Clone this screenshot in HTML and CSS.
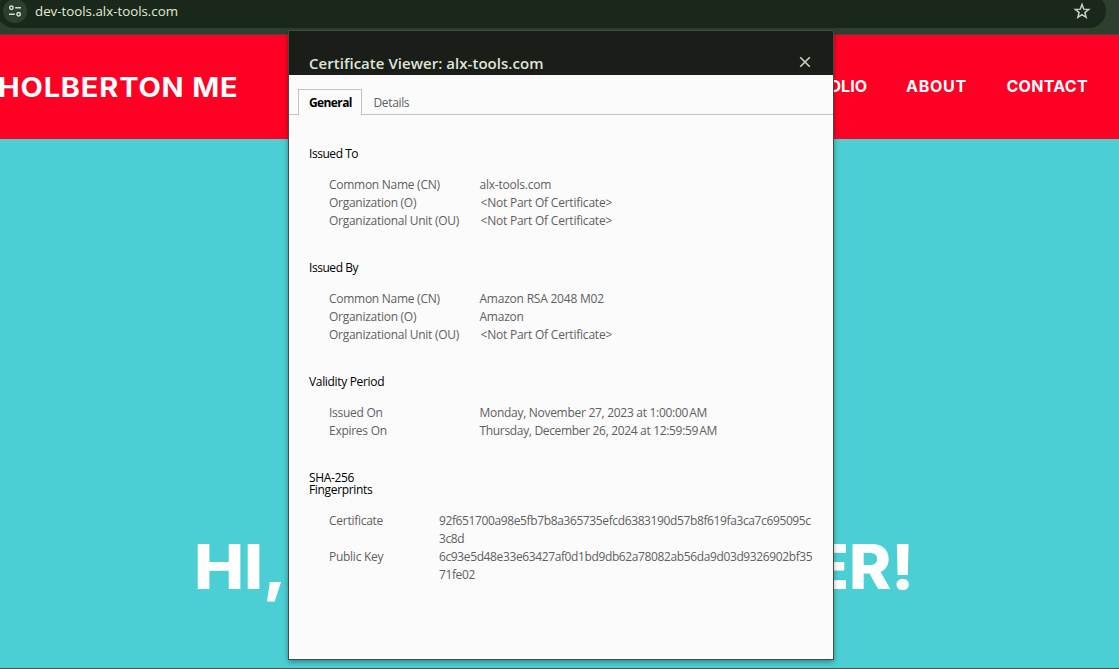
FILE: index.html
```
<!DOCTYPE html>
<html lang="en">
<head>
<meta charset="utf-8">
<title>Certificate Viewer</title>
<link rel="stylesheet" href="styles.css">
</head>
<body>
<div class="browser">
  <div class="toolbar">
    <div class="omnibox">
      <span class="site-info">
        <svg width="24" height="24" viewBox="0 0 24 24" fill="none" stroke="#d5ded2" stroke-width="1.5"><circle cx="8.4" cy="8.8" r="1.7"/><path d="M12.2 8.8H18M6 15.2h5.8"/><circle cx="15.6" cy="15.2" r="1.7"/></svg>
      </span>
      <span class="url">dev-tools.alx-tools.com</span>
      <svg class="star" width="18" height="18" viewBox="0 0 18 18" fill="none" stroke="#c8cfc5" stroke-width="1.5"><path d="M9 2.5l1.75 4.65 4.95.25-3.85 3.15 1.3 4.85L9 12.7l-4.15 2.7 1.3-4.85L2.3 7.4l4.95-.25z"/></svg>
    </div>
  </div>
  <header class="site-header">
    <div class="brand">HOLBERTON ME</div>
    <nav class="nav"><span class="folio">OLIO</span><span class="about">ABOUT</span><span class="contact">CONTACT</span></nav>
  </header>
  <main class="hero">
    <h1 class="headline"><span class="hi">HI,</span><span class="er">ER!</span></h1>
  </main>
</div>
<section class="dialog">
  <div class="titlebar">
    <span class="title">Certificate Viewer: alx-tools.com</span>
    <svg class="close" width="12" height="12" viewBox="0 0 12 12" stroke="#cdd2c9" stroke-width="1.6"><path d="M1.2 1.2l9.6 9.6M10.8 1.2L1.2 10.8"/></svg>
  </div>
  <div class="tabs"><span class="tab active">General</span><span class="tab details">Details</span></div>
  <div class="content">
    <div class="group">
      <h2 class="issued">Issued To</h2>
      <dl>
        <dt>Common Name (CN)</dt><dd>alx-tools.com</dd>
        <dt>Organization (O)</dt><dd class="none">&lt;Not Part Of Certificate&gt;</dd>
        <dt>Organizational Unit (OU)</dt><dd class="none">&lt;Not Part Of Certificate&gt;</dd>
      </dl>
    </div>
    <div class="group">
      <h2 class="issued">Issued By</h2>
      <dl>
        <dt>Common Name (CN)</dt><dd>Amazon RSA 2048 M02</dd>
        <dt>Organization (O)</dt><dd>Amazon</dd>
        <dt>Organizational Unit (OU)</dt><dd class="none">&lt;Not Part Of Certificate&gt;</dd>
      </dl>
    </div>
    <div class="group">
      <h2>Validity Period</h2>
      <dl class="dates">
        <dt>Issued On</dt><dd class="issued-on">Monday, November 27, 2023 at 1:00:00&#8239;AM</dd>
        <dt>Expires On</dt><dd>Thursday, December 26, 2024 at 12:59:59&#8239;AM</dd>
      </dl>
    </div>
    <div class="group">
      <h2 class="two-line">SHA-256<br>Fingerprints</h2>
      <dl class="prints">
        <dt>Certificate</dt><dd>92f651700a98e5fb7b8a365735efcd6383190d57b8f619fa3ca7c695095c<br>3c8d</dd>
        <dt>Public Key</dt><dd>6c93e5d48e33e63427af0d1bd9db62a78082ab56da9d03d9326902bf35<br>71fe02</dd>
      </dl>
    </div>
  </div>
</section>
</body>
</html>
```
FILE: styles.css
```
* { box-sizing: border-box; }
body {
  margin: 0;
  width: 1119px;
  height: 669px;
  overflow: hidden;
  position: relative;
  font-family: "Open Sans", "Noto Sans", sans-serif;
}
.browser { display: flex; flex-direction: column; height: 669px; border-bottom: 1px solid #46513f; }
.toolbar { height: 35px; background: #2e402d; border-bottom: 1px solid #43483e; overflow: hidden; }
.omnibox {
  height: 34px;
  margin: -6px 13px 0 -3px;
  padding-left: 6px;
  background: #1a281b;
  border-radius: 17px;
  display: flex;
  align-items: center;
}
.site-info { width: 24px; height: 24px; border-radius: 12px; background: #2e402d; display: flex; }
.url { margin-left: 8px; font-size: 13.3px; line-height: 20px; color: #e2ead8; white-space: nowrap; padding-bottom: 1px; }
.star { margin: 0 15px 0 auto; }
.site-header {
  height: 104px;
  background: #ff0024;
  color: #fff;
  font-family: Inter, sans-serif;
  font-weight: 700;
  display: flex;
  justify-content: space-between;
  align-items: center;
  padding-right: 31px;
}
.brand {
  font-size: 27px;
  margin-left: -2px;
  white-space: nowrap;
  letter-spacing: 0.8px;
  transform: scaleX(1.072);
  transform-origin: left;
}
.nav { display: flex; font-size: 16px; padding-bottom: 2px; }
.nav span { white-space: nowrap; }
.folio { margin-right: 39px; }
.about { letter-spacing: 0.75px; margin-right: 38.5px; }
.contact { letter-spacing: 0.3px; }
.folio, .about { transform: translateX(-1px); }
.hero { flex: 1; background: #4bcfd4; padding-top: 388px; }
.headline {
  margin: 0;
  display: flex;
  justify-content: space-between;
  padding: 0 205px 0 194px;
  color: #fff;
  font: 800 62px/80px Inter, sans-serif;
}
.hi { transform: scaleX(1.08); transform-origin: left; }
.er { transform: scaleX(1.03); transform-origin: right; }
.dialog {
  position: absolute;
  left: 288px;
  top: 30px;
  width: 546px;
  height: 630px;
  border: 1px solid #454a42;
  background: #fbfbfb;
  box-shadow: 0 2px 5px rgba(0, 0, 0, .35);
  color: #5f6060;
}
.titlebar {
  height: 44px;
  background: #1a1d18;
  display: flex;
  justify-content: space-between;
  align-items: flex-start;
  padding: 22px 22px 0 20px;
}
.title { font-size: 15px; font-weight: 600; line-height: 20px; color: #dfe5d8; white-space: nowrap; letter-spacing: 0.04px; }
.close { margin-top: 3px; }
.tabs {
  height: 40px;
  border-bottom: 1px solid #c2c2c2;
  display: flex;
  align-items: flex-end;
  padding-left: 9px;
  font-size: 12px;
  line-height: 25px;
}
.tab { height: 25px; white-space: nowrap; }
.tab.active {
  width: 64px;
  height: 26px;
  margin-bottom: -1px;
  padding-left: 10px;
  border: 1px solid #c2c2c2;
  border-bottom: 0;
  background: #fbfbfb;
  color: #000;
  font-weight: 700;
  letter-spacing: -0.6px;
}
.details { margin-left: 11.5px; line-height: 27px; letter-spacing: -0.35px; }
.content { padding: 32px 20px 0; font-size: 12px; letter-spacing: -0.22px; }
.group { margin-bottom: 31px; }
h2 { margin: 0; font-size: 12px; font-weight: 400; line-height: 14px; color: #000; letter-spacing: -0.33px; }
.issued { letter-spacing: -0.45px; }
.two-line { line-height: 12px; padding-top: 1px; }
dl {
  margin: 15px 0 0 20px;
  display: grid;
  grid-template-columns: 150.5px 1fr;
  line-height: 18px;
}
dt, dd { margin: 0; white-space: nowrap; }
dt { letter-spacing: -0.27px; }
.none { padding-left: 1px; }
.dates { letter-spacing: -0.33px; }
.issued-on { letter-spacing: -0.29px; }
.prints { grid-template-columns: 110px 1fr; margin-top: 16px; }
.prints dd { letter-spacing: -0.38px; }
```
